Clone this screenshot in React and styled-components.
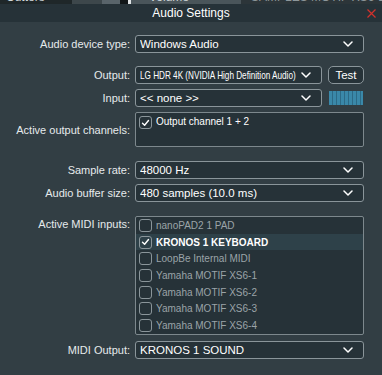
import React from "react";
import styled, { createGlobalStyle } from "styled-components";

const GlobalStyle = createGlobalStyle`
  html, body { margin: 0; padding: 0; background: #323e44; }
  body { font-family: "Liberation Sans", Arial, sans-serif; }
  * { box-sizing: border-box; }
`;

const Root = styled.div`
  width: 382px;
  height: 375px;
  overflow: hidden;
  display: flex;
  flex-direction: column;
  background: #323e44;
  color: #e9edef;
`;

const TopStrip = styled.div`
  height: 4px;
  display: flex;
  overflow: hidden;
  background: #2a3337;
`;

const StripSeg = styled.div`
  width: ${(p) => p.$w}px;
  flex: ${(p) => (p.$grow ? 1 : "none")};
  background: ${(p) => p.$bg};
  color: ${(p) => p.$fg || "#cfd6d9"};
  font-size: 12px;
  line-height: 12px;
  padding-left: ${(p) => p.$pad || 0}px;
  white-space: nowrap;
  overflow: hidden;
  margin-top: -9px;
  height: 13px;
`;

const TitleBar = styled.div`
  height: 18px;
  background: #263238;
  display: grid;
  grid-template-columns: 1fr auto 1fr;
  align-items: center;
  font-size: 12px;
  color: #ffffff;
`;

const Title = styled.div`
  grid-column: 2;
`;

const Close = styled.svg`
  grid-column: 3;
  justify-self: end;
  margin-right: 6px;
  width: 9px;
  height: 9px;
`;

const Body = styled.div`
  display: flex;
  flex-direction: column;
  padding: 13px 18px 0 0;
`;

const Row = styled.div`
  display: grid;
  grid-template-columns: 130px minmax(0, 1fr);
  column-gap: 5px;
  margin-top: ${(p) => p.$gap || 0}px;
`;

const Label = styled.div`
  text-align: right;
  font-size: 11px;
  color: #e6eaec;
  white-space: nowrap;
  align-self: ${(p) => (p.$top ? "start" : "center")};
  padding-top: ${(p) => (p.$top ? 2 : 0)}px;
`;

const Controls = styled.div`
  display: flex;
  align-items: center;
  min-width: 0;
  gap: ${(p) => p.$gap || 0}px;
`;

const Combo = styled.div`
  flex: 1;
  min-width: 0;
  height: 18px;
  border: 1px solid #8a959a;
  border-radius: 3px;
  background: #263238;
  display: flex;
  align-items: center;
  padding: 0 10px 0 4px;
  font-size: 11.5px;
  color: #ffffff;
  white-space: nowrap;
`;

const ComboText = styled.span`
  flex: 1;
  min-width: 0;
  overflow: hidden;
`;

const Squeezed = styled.span`
  display: inline-block;
  transform: scaleX(${(p) => p.$scale});
  transform-origin: left center;
`;

const Chevron = styled.svg`
  width: 10px;
  height: 6px;
  flex: none;
`;

const Button = styled.div`
  width: 36px;
  height: 18px;
  border: 1px solid #8a959a;
  border-radius: 5px;
  background: #263238;
  color: #ffffff;
  font-size: 11.5px;
  display: flex;
  align-items: center;
  justify-content: center;
  flex: none;
`;

const Meter = styled.div`
  width: 34px;
  height: 14px;
  margin: 0 1px 0 1px;
  flex: none;
  background: repeating-linear-gradient(
    90deg,
    #3a88a9 0px,
    #3a88a9 3px,
    #2c6a86 3px,
    #2c6a86 4px
  );
`;

const ListBox = styled.div`
  height: ${(p) => p.$h}px;
  border: 1px solid #7d888d;
  border-radius: 2px;
  background: #263238;
  display: flex;
  flex-direction: column;
  overflow: hidden;
`;

const ListRow = styled.div`
  height: 16.7px;
  flex: none;
  display: flex;
  align-items: ${(p) => (p.$top ? "flex-start" : "center")};
  padding: ${(p) => (p.$top ? "3px" : "0")} 0 0 3px;
  gap: 4px;
  background: ${(p) => (p.$selected ? "#2e4149" : "transparent")};
  font-size: 10px;
  font-weight: ${(p) => (p.$bold ? "bold" : "normal")};
  color: ${(p) => (p.$bright ? "#ffffff" : "#9ba4a8")};
  white-space: nowrap;
`;

const Box = styled.div`
  width: 13px;
  height: 13px;
  flex: none;
  border: 1px solid #8a959a;
  border-radius: 3px;
  display: flex;
  align-items: center;
  justify-content: center;
`;

const ChevronIcon = () => (
  <Chevron viewBox="0 0 10 6">
    <path d="M1 1 L5 5 L9 1" stroke="#ffffff" strokeWidth="1.5" fill="none" strokeLinecap="round" strokeLinejoin="round" />
  </Chevron>
);

const Check = ({ checked }) => (
  <Box>
    {checked && (
      <svg width="9" height="8" viewBox="0 0 9 8">
        <path d="M1.5 4.3 L3.6 6.3 L7.5 1.5" stroke="#ffffff" strokeWidth="1.4" fill="none" strokeLinecap="round" strokeLinejoin="round" />
      </svg>
    )}
  </Box>
);

const ComboBox = ({ children, scale }) => (
  <Combo>
    <ComboText>{scale ? <Squeezed $scale={scale}>{children}</Squeezed> : children}</ComboText>
    <ChevronIcon />
  </Combo>
);

const midiInputs = [
  { name: "nanoPAD2 1 PAD" },
  { name: "KRONOS 1 KEYBOARD", on: true },
  { name: "LoopBe Internal MIDI" },
  { name: "Yamaha MOTIF XS6-1" },
  { name: "Yamaha MOTIF XS6-2" },
  { name: "Yamaha MOTIF XS6-3" },
  { name: "Yamaha MOTIF XS6-4" },
];

export default function App() {
  return (
    <>
      <GlobalStyle />
      <Root>
        <TopStrip>
          <StripSeg $w={72} $bg="#1f2729" $pad={6}>Cutters</StripSeg>
          <StripSeg $w={30} $bg="#3d474b" />
          <StripSeg $w={18} $bg="#59646a" />
          <StripSeg $w={8} $bg="#111618" />
          <StripSeg $w={3} $bg="#e0e4e6" />
          <StripSeg $w={110} $bg="#4a555a" $pad={18}>Volume</StripSeg>
          <StripSeg $grow $bg="#2c3539" $fg="#8d979b" $pad={10}>SAMPLES MOTIF XS6-1</StripSeg>
        </TopStrip>
        <TitleBar>
          <Title>Audio Settings</Title>
          <Close viewBox="0 0 9 9">
            <path d="M0.5 0.5 L8.5 8.5 M8.5 0.5 L0.5 8.5" stroke="#d2312c" strokeWidth="1.2" />
          </Close>
        </TitleBar>
        <Body>
          <Row>
            <Label>Audio device type:</Label>
            <Controls>
              <ComboBox>Windows Audio</ComboBox>
            </Controls>
          </Row>
          <Row $gap={13}>
            <Label>Output:</Label>
            <Controls $gap={6}>
              <ComboBox scale={0.71}>LG HDR 4K (NVIDIA High Definition Audio)</ComboBox>
              <Button>Test</Button>
            </Controls>
          </Row>
          <Row $gap={5}>
            <Label>Input:</Label>
            <Controls $gap={6}>
              <ComboBox>&lt;&lt; none &gt;&gt;</ComboBox>
              <Meter />
            </Controls>
          </Row>
          <Row $gap={5}>
            <Label>Active output channels:</Label>
            <ListBox $h={35}>
              <ListRow $top $bright>
                <Check checked />
                Output channel 1 + 2
              </ListRow>
            </ListBox>
          </Row>
          <Row $gap={14}>
            <Label>Sample rate:</Label>
            <Controls>
              <ComboBox>48000 Hz</ComboBox>
            </Controls>
          </Row>
          <Row $gap={5}>
            <Label>Audio buffer size:</Label>
            <Controls>
              <ComboBox>480 samples (10.0 ms)</ComboBox>
            </Controls>
          </Row>
          <Row $gap={14}>
            <Label $top>Active MIDI inputs:</Label>
            <ListBox $h={119}>
              {midiInputs.map((m) => (
                <ListRow key={m.name} $selected={m.on} $bright={m.on} $bold={m.on}>
                  <Check checked={m.on} />
                  {m.name}
                </ListRow>
              ))}
            </ListBox>
          </Row>
          <Row $gap={6}>
            <Label>MIDI Output:</Label>
            <Controls>
              <ComboBox>KRONOS 1 SOUND</ComboBox>
            </Controls>
          </Row>
        </Body>
      </Root>
    </>
  );
}
